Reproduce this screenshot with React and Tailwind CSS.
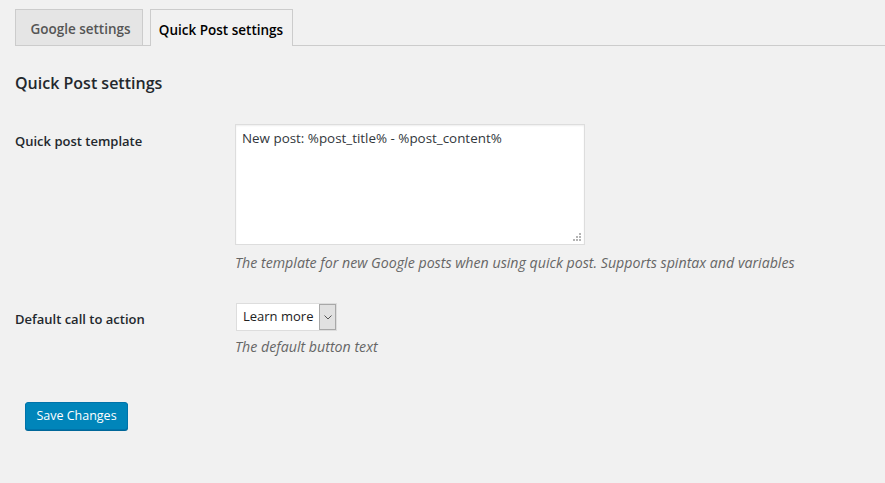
import React from "react";

const font = { fontFamily: '"Open Sans", "Noto Sans", sans-serif' };

export default function App() {
  return (
    <div
      className="min-h-[483px] w-[885px] bg-[#f1f1f1] text-[#23282d] font-['Open_Sans',sans-serif]"
      style={font}
    >
      {/* Tabs */}
      <div className="ml-[15px] flex items-end gap-[7px] border-b border-[#cccccc] pt-[10px] h-[46px]">
        <div className="flex h-[36px] w-[128px] items-center justify-center border border-b-0 border-[#cccccc] bg-[#e5e5e5] pt-[4px] pl-[3px] text-[13.5px] font-semibold text-[#555555]">
          Google settings
        </div>
        <div className="-mb-px flex h-[37px] w-[143px] items-center justify-center border border-b-0 border-[#cccccc] bg-[#f1f1f1] pt-[4px] pr-px text-[13.5px] font-semibold text-black">
          Quick Post settings
        </div>
      </div>

      <div className="px-[15px]">
        <h2 className="mt-[25px] text-[16px] font-semibold leading-[24px] text-[#23282d]">
          Quick Post settings
        </h2>

        {/* Template row */}
        <div className="mt-[29px] flex">
          <div className="w-[220px] pt-[7px] text-[13px] font-semibold leading-[20px]">
            Quick post template
          </div>
          <div>
            <div className="relative h-[121px] w-[350px] border border-[#dddddd] bg-white shadow-[inset_0_1px_2px_rgba(0,0,0,0.07)]">
              <div className="px-[6px] pt-[3px] text-[13.4px] leading-[20px] text-[#32373c]">
                New post: %post_title% - %post_content%
              </div>
              <svg
                className="absolute bottom-[2px] right-[2px]"
                width="9"
                height="9"
                viewBox="0 0 9 9"
              >
                <rect x="6" y="0" width="2" height="2" fill="#b4b4b4" />
                <rect x="3" y="3" width="2" height="2" fill="#b4b4b4" />
                <rect x="6" y="3" width="2" height="2" fill="#b4b4b4" />
                <rect x="0" y="6" width="2" height="2" fill="#b4b4b4" />
                <rect x="3" y="6" width="2" height="2" fill="#b4b4b4" />
                <rect x="6" y="6" width="2" height="2" fill="#b4b4b4" />
              </svg>
            </div>
            <p className="mt-[8px] text-[14.2px] italic leading-[20px] text-[#666666]">
              The template for new Google posts when using quick post. Supports
              spintax and variables
            </p>
          </div>
        </div>

        {/* CTA row */}
        <div className="mt-[30px] flex">
          <div className="w-[220px] pt-[6px] text-[13px] font-semibold leading-[20px]">
            Default call to action
          </div>
          <div>
            <div className="ml-px flex h-[28px] w-[101px] border border-[#dddddd] bg-white">
              <div className="flex flex-1 items-center pl-[6px] text-[13px] text-[#222222]">
                Learn more
              </div>
              <div className="flex w-[17px] items-center justify-center border border-[#a8a8a8] bg-[#e1e1e1]">
                <svg width="8" height="5" viewBox="0 0 8 5">
                  <path
                    d="M0.5 0.5 L4 4 L7.5 0.5"
                    fill="none"
                    stroke="#555555"
                    strokeWidth="1"
                  />
                </svg>
              </div>
            </div>
            <p className="mt-[6px] text-[14.2px] italic leading-[20px] text-[#666666]">
              The default button text
            </p>
          </div>
        </div>

        {/* Submit */}
        <div className="mt-[45px] pl-[10px]">
          <button className="h-[28px] w-[103px] rounded-[3px] border border-[#0073aa] bg-[#0085ba] pt-px text-[12.5px] text-white shadow-[0_1px_0_#006799]">
            Save Changes
          </button>
        </div>
      </div>
    </div>
  );
}
